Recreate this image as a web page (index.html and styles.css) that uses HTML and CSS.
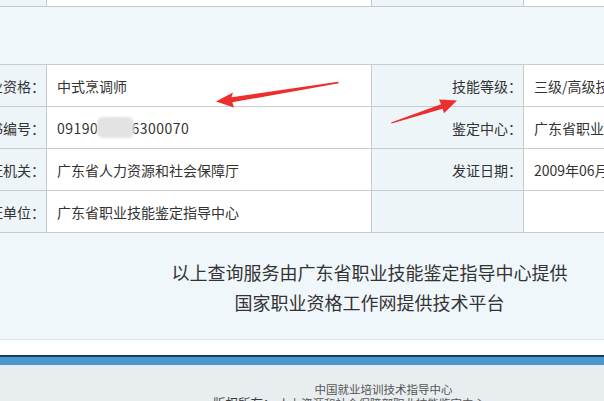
FILE: index.html
```html
<!DOCTYPE html>
<html lang="zh-CN">
<head>
<meta charset="utf-8">
<title>证书查询</title>
<link rel="stylesheet" href="styles.css">
</head>
<body>
<div class="screen">
  <div class="page">
    <div class="grid top-table">
      <div class="cell label"></div>
      <div class="cell value"></div>
      <div class="cell label"></div>
      <div class="cell value"></div>
    </div>
    <div class="band"></div>
    <div class="grid main-table">
      <div class="cell label">职业资格：</div>
      <div class="cell value">中式烹调师</div>
      <div class="cell label">技能等级：</div>
      <div class="cell value">三级/高级技能</div>

      <div class="cell label">证书编号：</div>
      <div class="cell value num">09190<span class="mask">1234</span>6300070</div>
      <div class="cell label">鉴定中心：</div>
      <div class="cell value">广东省职业技能鉴定指导中心</div>

      <div class="cell label">发证机关：</div>
      <div class="cell value">广东省人力资源和社会保障厅</div>
      <div class="cell label">发证日期：</div>
      <div class="cell value">2009年06月</div>

      <div class="cell label">发证单位：</div>
      <div class="cell value">广东省职业技能鉴定指导中心</div>
      <div class="cell label"></div>
      <div class="cell value"></div>
    </div>
    <div class="notice">
      <p>以上查询服务由广东省职业技能鉴定指导中心提供</p>
      <p>国家职业资格工作网提供技术平台</p>
    </div>
    <div class="spacer"></div>
    <div class="bar"></div>
    <div class="footer">
      <p class="f1">中国就业培训技术指导中心</p>
      <p class="f2"><span class="strong">版权所有：</span>&nbsp;人力资源和社会保障部职业技能鉴定中心</p>
    </div>
  </div>
  <svg class="arrows" width="604" height="401" viewBox="0 0 604 401">
    <polygon points="338,81.8 231.5,97.2 233,92.6 216,101.6 234,107.4 232.3,102.3 339,83.2" fill="#ec2f2c"/>
    <polygon points="391,122.4 441,104.3 439,99.4 457,100.6 444,113.2 442.6,108.8 391.6,123.6" fill="#ec2f2c"/>
  </svg>
</div>
</body>
</html>
```
FILE: styles.css
```css
html, body {
  margin: 0;
  padding: 0;
  background: #ffffff;
}

.screen {
  position: relative;
  width: 604px;
  height: 401px;
  overflow: hidden;
  font-family: "Noto Sans CJK SC", "Microsoft YaHei", sans-serif;
  color: #333333;
}

.page {
  width: 953px;
  margin-left: -105px;
  background: #f0f7fb;
}

.grid {
  display: grid;
  grid-template-columns: 151px 324px 151px 324px;
  grid-auto-rows: 41px;
  column-gap: 1px;
  row-gap: 1px;
  background: #cacaca;
}

.top-table {
  margin-top: -35px;
  border-bottom: 1px solid #cacaca;
}

.band {
  height: 57px;
}

.main-table {
  border-top: 1px solid #cacaca;
  border-bottom: 1px solid #cacaca;
}

.cell {
  display: flex;
  align-items: center;
  font-size: 14px;
  white-space: nowrap;
  overflow: hidden;
}

.label {
  background: #edf5f9;
  justify-content: flex-end;
  padding-right: 1px;
}

.value {
  background: #ffffff;
  padding-left: 10px;
}

.num {
  letter-spacing: 0.5px;
}

.mask {
  position: relative;
  display: inline-block;
  color: transparent;
  background: #e3e3e3;
  border-radius: 6px;
  padding: 0 2px;
  margin: 0 -3px 0 -1px;
  line-height: 21px;
  filter: blur(1.2px);
}

.notice {
  padding: 24px 4px 22px 0;
  border-bottom: 1px solid #dfe5e8;
  text-align: center;
  font-size: 18px;
  line-height: 30px;
  color: #333333;
}

.notice p {
  margin: 0;
}

.spacer {
  height: 15px;
  background: #ffffff;
}

.bar {
  height: 8px;
  border-top: 2px solid #163d62;
  background: #4a98cf;
}

.footer {
  background: #e8edef;
  padding-top: 17px;
  height: 60px;
  text-align: center;
  font-size: 11.5px;
  line-height: 14px;
  color: #555555;
}

.footer p {
  margin: 0;
}

.f1 {
  padding-left: 24px;
}

.f2 {
  padding-right: 45px;
}

.f2 .strong {
  font-size: 12.5px;
  color: #3a3a3a;
}

.arrows {
  position: absolute;
  top: 0;
  left: 0;
  pointer-events: none;
}
```
